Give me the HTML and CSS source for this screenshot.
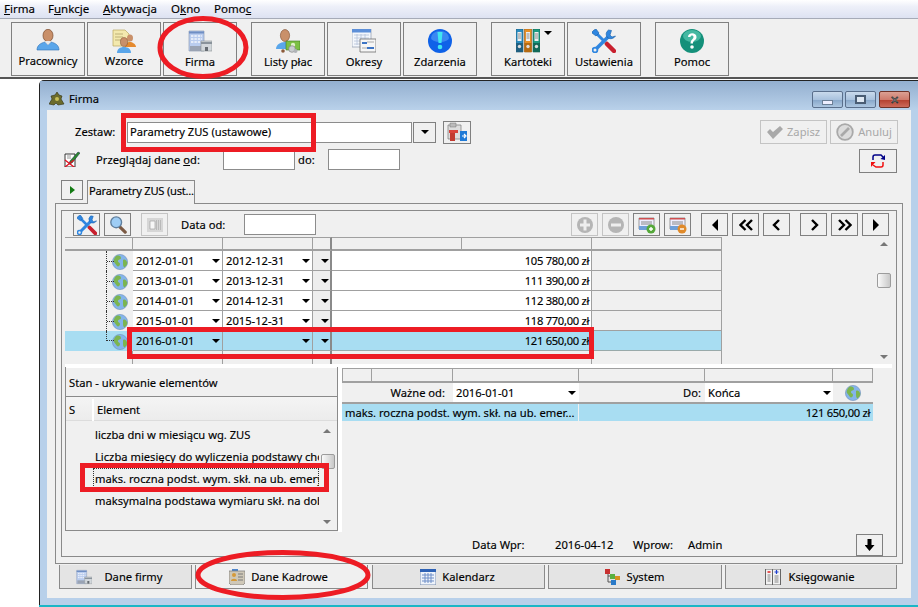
FILE: index.html
```html
<!DOCTYPE html>
<html lang="pl">
<head>
<meta charset="utf-8">
<title>Firma</title>
<link rel="stylesheet" href="styles.css">
</head>
<body>
<svg class="sprite" aria-hidden="true">
  <symbol id="person" viewBox="0 0 24 24"><ellipse cx="12" cy="6.500" rx="5" ry="6.200" fill="#c9906a" stroke="#7a4a2c" stroke-width=".7"/><path d="M1 21c0-5 4-7 8-8l3 3 3-3c4 1 8 3 8 8z" fill="#5aa6ea" stroke="#2c6fb5" stroke-width=".6"/><path d="M9 13l3 3 3-3-1-1h-4z" fill="#e8e8e8"/></symbol>
  <symbol id="wzorce" viewBox="0 0 24 24"><path d="M1 1h12l4 4v12H1z" fill="#f3e9ae" stroke="#b9a860" stroke-width=".7"/><path d="M3 5h8M3 8h8M3 11h6" stroke="#bdb078" stroke-width="1"/><ellipse cx="18" cy="9" rx="3" ry="3.600" fill="#c9906a"/><path d="M13 18c0-3 3-5 5-5s6 2 6 5z" fill="#e58a2e"/><ellipse cx="12" cy="13" rx="3.600" ry="4.400" fill="#c9906a" stroke="#7a4a2c" stroke-width=".5"/><path d="M5 24c0-4 3-6 7-6s7 2 7 6z" fill="#5aa6ea"/></symbol>
  <symbol id="firma" viewBox="0 0 24 24"><path d="M1 2h15v20H1z" fill="#b9ccee" stroke="#8090ad" stroke-width=".6"/><path d="M1 3.500h15" stroke="#6f8fc4" stroke-width="2"/><path d="M3 7h11M3 10h11M3 13h11" stroke="#f3f6fc" stroke-width="1.400" stroke-dasharray="2.400 1"/><path d="M2 22v-5h14v5" fill="#9aa3b3"/><path d="M13 12h11v10H13z" fill="#d2d7db" stroke="#8a9096" stroke-width=".6"/><path d="M13 14h11" stroke="#8a939b" stroke-width="2"/><path d="M17 18h3v4h-3z" fill="#666c72"/></symbol>
  <symbol id="listy" viewBox="0 0 24 24"><ellipse cx="9" cy="6.500" rx="4.600" ry="6" fill="#c9906a" stroke="#7a4a2c" stroke-width=".6"/><path d="M0 20c0-4 4-7 9-7s7 2 8 5v2z" fill="#5aa6ea"/><path d="M10 12h14v9H10z" fill="#7cc044" stroke="#3c7a22" stroke-width=".6"/><circle cx="17" cy="16" r="2.200" fill="#dff2c8"/><circle cx="16" cy="20" r="3.300" fill="#c9cdd0" stroke="#777" stroke-width=".6"/><circle cx="19.500" cy="22" r="2" fill="#b0b4b8"/><circle cx="7" cy="22" r="1.800" fill="#8b5a3a"/></symbol>
  <symbol id="okresy" viewBox="0 0 24 24"><path d="M0 0h19v18H0z" fill="#f4f7fc" stroke="#8d99ad" stroke-width=".7"/><path d="M0 0h19v3.500H0z" fill="#5d8fd8"/><path d="M2 6h15M2 9h15M2 12h15M2 15h15M5 5v11M9 5v11M13 5v11" stroke="#b5c2d8" stroke-width=".8"/><path d="M8 10h16v13H8z" fill="#f6f6f6" stroke="#6c6c6c" stroke-width=".8"/><path d="M10 13h5v2h-5z" fill="#3d74c4"/><path d="M15 18h7v2h-7z" fill="#3d74c4"/><path d="M15 13h7M10 19h5" stroke="#aaa"/></symbol>
  <symbol id="alert" viewBox="0 0 24 24"><circle cx="12" cy="12" r="12" fill="#0f62e8"/><path d="M3 9a9 7 0 0 1 18 0 9 4 0 0 1-18 0z" fill="#3a88f2"/><path d="M9.500 3h5l-1 11h-3z" fill="#3fe6f2"/><circle cx="12" cy="18" r="2.300" fill="#3fe6f2"/></symbol>
  <symbol id="kart" viewBox="0 0 24 24"><path d="M0 0h7v23H0z" fill="#2b8cc0" stroke="#17556f" stroke-width=".6"/><path d="M8.500 0h7v23h-7z" fill="#e88f24" stroke="#91540e" stroke-width=".6"/><path d="M17 0h7v23h-7z" fill="#1e9b82" stroke="#0e5a4a" stroke-width=".6"/><path d="M0 14h7v9H0z" fill="#1f5f80"/><path d="M8.500 14h7v9h-7z" fill="#b56a12"/><path d="M17 14h7v9h-7z" fill="#126a58"/><path d="M1.500 3h4v9h-4zM10 3h4v9h-4zM18.500 3h4v9h-4z" fill="#eee"/><path d="M2 5h3M2 7h3M2 9h3M10.500 5h3M10.500 7h3M10.500 9h3M19 5h3M19 7h3M19 9h3" stroke="#777" stroke-width=".8"/><circle cx="3.500" cy="17.500" r="1.700" fill="#ddd"/><circle cx="12" cy="17.500" r="1.700" fill="#ddd"/><circle cx="20.500" cy="17.500" r="1.700" fill="#ddd"/></symbol>
  <symbol id="tools" viewBox="0 0 24 24"><path d="M3 3l9 9" stroke="#2f86e0" stroke-width="3"/><path d="M13 13l2 2" stroke="#9aa" stroke-width="3"/><path d="M15 15l7 7" stroke="#c8202e" stroke-width="4.500" stroke-linecap="round"/><path d="M3 21L17 7" stroke="#2f86e0" stroke-width="3.600"/><path d="M16.500 1a5.500 5.500 0 0 0-1.500 7l1 1a5.500 5.500 0 0 0 7.500-2l-3.500 1-2-2 1.500-4.500z" fill="#2f86e0" stroke="#155ea8" stroke-width=".6"/><path d="M0 3l2-2 2-1 3 4-3 3-4-3z" fill="#2f86e0" stroke="#155ea8" stroke-width=".6"/><circle cx="3" cy="21" r="2.400" fill="#f0f0f0" stroke="#2f86e0" stroke-width="1.800"/></symbol>
  <symbol id="help" viewBox="0 0 24 24"><circle cx="12" cy="12" r="12" fill="#14907a"/><ellipse cx="12" cy="7" rx="9" ry="6" fill="#45b8a2"/><path d="M8 8c0-5 8.500-5 8.500 0 0 3.500-3.500 3-3.500 6.500h-2.500c0-4 3-4 3-6.500 0-2-3-2-3 0z" fill="#fff"/><circle cx="12" cy="18" r="1.800" fill="#fff"/></symbol>
  <symbol id="globe" viewBox="0 0 16 16"><circle cx="8" cy="8" r="7.600" fill="#84b4ea" stroke="#6f8eb8" stroke-width=".6"/><path d="M4 2c3-1 5 0 5 2S6 5 6 7s2 1 2 3-2 3-3 2-2-3-3-4 0-4 2-6zM11 6c2-1 3 0 4 2s-1 4-2 5-2-1-2-3 0-3 0-4z" fill="#7cb550"/></symbol>
  <symbol id="biz" viewBox="0 0 16 16"><path d="M6 4l2-3 2 3 3 1-1 3 3 5-6 1-2-2-2 2-5-1 3-5-1-3z" fill="#6b6b2c" stroke="#2f2f10" stroke-width=".6"/><circle cx="8" cy="8" r="2" fill="#c7bf57"/></symbol>
  <symbol id="config" viewBox="0 0 20 20"><path d="M1 3h13v14H1z" fill="#ddd" stroke="#777" stroke-width=".7"/><path d="M3 1h6v4H3z" fill="#bbb" stroke="#777" stroke-width=".5"/><path d="M3 8h5v11H3z" fill="#c23b30"/><path d="M2 8h9v3H2z" fill="#d9433a"/><path d="M13 9h7v10h-7z" fill="#1f7ad6"/><path d="M15 14h3M17 12l2 2-2 2" stroke="#fff" stroke-width="1.200" fill="none"/></symbol>
  <symbol id="noedit" viewBox="0 0 16 16"><path d="M1 3h10v13H1z" fill="#fff" stroke="#222" stroke-width=".9"/><path d="M3 5h4M3 7h4" stroke="#999"/><path d="M6 10L14 1l2 1-8 10-3 1z" fill="#2c8a2c" stroke="#124" stroke-width=".5"/><path d="M1 9l9 7M10 9l-9 7" stroke="#e01020" stroke-width="1.300"/></symbol>
  <symbol id="check" viewBox="0 0 16 16"><path d="M0 8l3-3 3 3 7-6 3 3-10 10z" fill="#a9a9a9"/></symbol>
  <symbol id="ban" viewBox="0 0 18 18"><circle cx="9" cy="9" r="7.800" fill="#dcdcdc" stroke="#a9a9a9" stroke-width="1.800"/><path d="M5 13l8-8" stroke="#a9a9a9" stroke-width="2.600"/></symbol>
  <symbol id="refresh" viewBox="0 0 14 14"><path d="M2 6V3a2 2 0 0 1 2-2h6l2 2" fill="none" stroke="#000088" stroke-width="1.500"/><path d="M9.500 5L14 1v5z" fill="#000088"/><path d="M12 8v3a2 2 0 0 1-2 2H5L2 11" fill="none" stroke="#f01010" stroke-width="1.500"/><path d="M4.500 8L0 8v5z" fill="#f01010"/></symbol>
  <symbol id="zoomg" viewBox="0 0 20 20"><path d="M12 12l6 6" stroke="#7b5a44" stroke-width="3.500" stroke-linecap="round"/><circle cx="8" cy="7" r="6" fill="#9ecdf5" stroke="#5f7f9e" stroke-width="1.500"/></symbol>
  <symbol id="calc" viewBox="0 0 16 14"><path d="M0 0h16v14H0z" fill="#d6d6d6"/><path d="M3 3h5v8H3z" fill="#f6f6f6" stroke="#999" stroke-width=".6"/><path d="M9 3h5M9 5h5M9 7h5M9 9h5M9 11h5" stroke="#9c9c9c" stroke-dasharray="1 1"/></symbol>
  <symbol id="plus" viewBox="0 0 16 16"><circle cx="8" cy="8" r="8" fill="#b5b5b5"/><path d="M3 6.500h3.500v-4h3v4H13v3H9.500v4h-3v-4H3z" fill="#eee"/></symbol>
  <symbol id="minus" viewBox="0 0 16 16"><circle cx="8" cy="8" r="8" fill="#b5b5b5"/><path d="M3 6.500h10v3H3z" fill="#eee"/></symbol>
  <symbol id="rowadd" viewBox="0 0 18 18"><path d="M1 2h15v11H1z" fill="#eef" stroke="#777" stroke-width=".7"/><path d="M1 2h15v1.500H1z" fill="#d05050"/><path d="M3 6h11M3 8h11" stroke="#888"/><path d="M1 10h10v4H1z" fill="#6f9fd8"/><circle cx="13" cy="13" r="4.500" fill="#55a83a"/><path d="M11 13h4M13 11v4" stroke="#fff" stroke-width="1.400"/></symbol>
  <symbol id="rowdel" viewBox="0 0 18 18"><path d="M1 2h15v11H1z" fill="#eef" stroke="#777" stroke-width=".7"/><path d="M1 2h15v1.500H1z" fill="#d05050"/><path d="M3 6h11M3 8h11" stroke="#888"/><path d="M1 10h10v4H1z" fill="#6f9fd8"/><circle cx="13" cy="13" r="4.500" fill="#e08a2a"/><path d="M11 13h4" stroke="#fff" stroke-width="1.400"/></symbol>
  <symbol id="kadry" viewBox="0 0 16 16"><path d="M3 0h6v3H3z" fill="#4f86cc"/><path d="M0 2h16v12l-2 2H2l-2-2z" fill="#cfc8b8" stroke="#777" stroke-width=".7"/><circle cx="5" cy="6" r="2" fill="#d59a3a"/><path d="M2 12c0-3 6-3 6 0z" fill="#d59a3a"/><path d="M9 5h5M9 8h5M9 11h5" stroke="#7a7a7a"/></symbol>
  <symbol id="cal" viewBox="0 0 16 16"><path d="M0 0h16v16H0z" fill="#eef3fb" stroke="#7a8fb0"/><path d="M0 0h16v3H0z" fill="#2e62b5"/><path d="M2 6h12M2 9h12M2 12h12M5 4v10M8 4v10M11 4v10" stroke="#6f8fc8"/></symbol>
  <symbol id="sys" viewBox="0 0 16 16"><path d="M3 3v10h6M3 7h4" fill="none" stroke="#555"/><path d="M0 0h5v5H0z" fill="#c83030"/><path d="M5 5h5v5H5z" fill="#5ab040"/><path d="M10 7h5v4h-5z" fill="#d89020"/><path d="M6 11h5v5H6z" fill="#2a7ac8"/></symbol>
  <symbol id="ksieg" viewBox="0 0 15 16"><path d="M0 0h15v16H0z" fill="#f2f2f2" stroke="#666"/><path d="M7 0v16" stroke="#666"/><path d="M2 3h3" stroke="#e02020" stroke-width="1.500"/><path d="M9 3h4M11 1v4" stroke="#2040d0" stroke-width="1.200"/><path d="M2 6h3M2 8h3M2 10h3M2 12h3M9 7h4M9 9h4M9 11h4M9 13h4" stroke="#888"/></symbol>
  <symbol id="ch1l" viewBox="0 0 14 12"><path d="M9 1L4 6l5 5" fill="none" stroke="#000" stroke-width="2.400"/></symbol>
  <symbol id="ch1r" viewBox="0 0 14 12"><path d="M5 1l5 5-5 5" fill="none" stroke="#000" stroke-width="2.400"/></symbol>
  <symbol id="ch2l" viewBox="0 0 14 12"><path d="M6.500 1L1.500 6l5 5M13 1L8 6l5 5" fill="none" stroke="#000" stroke-width="2.400"/></symbol>
  <symbol id="ch2r" viewBox="0 0 14 12"><path d="M1 1l5 5-5 5M7.500 1l5 5-5 5" fill="none" stroke="#000" stroke-width="2.400"/></symbol>
</svg>

<header class="menubar">
  <span class="menu-item m1"><u>F</u>irma</span>
  <span class="menu-item m2">F<u>u</u>nkcje</span>
  <span class="menu-item m3"><u>A</u>ktywacja</span>
  <span class="menu-item m4">O<u>k</u>no</span>
  <span class="menu-item m5">Pomo<u>c</u></span>
</header>

<nav class="toolbar">
  <div class="tool-group">
    <button class="tool tool-up"><svg class="tool-ic"><use href="#person"/></svg><span>Pracownicy</span></button>
    <button class="tool tool-up"><svg class="tool-ic"><use href="#wzorce"/></svg><span>Wzorce</span></button>
    <button class="tool"><svg class="tool-ic"><use href="#firma"/></svg><span>Firma</span></button>
  </div>
  <div class="tool-group">
    <button class="tool"><svg class="tool-ic"><use href="#listy"/></svg><span>Listy płac</span></button>
    <button class="tool"><svg class="tool-ic"><use href="#okresy"/></svg><span>Okresy</span></button>
    <button class="tool"><svg class="tool-ic"><use href="#alert"/></svg><span>Zdarzenia</span></button>
  </div>
  <div class="tool-group">
    <button class="tool tool-menu"><svg class="tool-ic"><use href="#kart"/></svg><span>Kartoteki</span></button>
    <button class="tool"><svg class="tool-ic"><use href="#tools"/></svg><span>Ustawienia</span></button>
  </div>
  <div class="tool-group">
    <button class="tool"><svg class="tool-ic"><use href="#help"/></svg><span>Pomoc</span></button>
  </div>
</nav>

<main class="desktop">
  <section class="window">
    <div class="titlebar">
      <svg class="title-ic"><use href="#biz"/></svg>
      <span class="title-text">Firma</span>
      <div class="win-btns">
        <span class="win-btn"><i class="glyph-min"></i></span>
        <span class="win-btn"><i class="glyph-max"></i></span>
        <span class="win-btn win-close">✕</span>
      </div>
    </div>
    <div class="client">
      <div class="form-row row-a">
        <label class="lbl-zestaw">Zestaw:</label>
        <div class="field field-zestaw">Parametry ZUS (ustawowe)</div>
        <button class="btn btn-drop"><i class="arr"></i></button>
        <button class="btn btn-cfg"><svg class="ic20"><use href="#config"/></svg></button>
        <div class="spacer"></div>
        <button class="btn btn-off btn-save"><svg class="ic16"><use href="#check"/></svg>Zapisz</button>
        <button class="btn btn-off btn-cancel"><svg class="ic18"><use href="#ban"/></svg>Anuluj</button>
      </div>
      <div class="form-row row-b">
        <svg class="ic-noedit"><use href="#noedit"/></svg>
        <label class="lbl-przegl">Przeglądaj dane <u>o</u>d:</label>
        <div class="field field-date"></div>
        <label class="lbl-do">do:</label>
        <div class="field field-date"></div>
        <div class="spacer"></div>
        <button class="btn btn-refresh"><svg class="ic14"><use href="#refresh"/></svg></button>
      </div>
      <div class="tabstrip">
        <button class="btn btn-play"><i class="arr-right-green"></i></button>
        <div class="doc-tab">Parametry ZUS (ust...</div>
      </div>
      <div class="outer-panel">
        <div class="inner-panel">
          <div class="grid-toolbar">
            <button class="btn btn-sq"><svg class="ic20"><use href="#tools"/></svg></button>
            <button class="btn btn-sq"><svg class="ic18"><use href="#zoomg"/></svg></button>
            <button class="btn btn-sq btn-off btn-calc"><svg class="ic-calc"><use href="#calc"/></svg></button>
            <label class="lbl-dataod">Data od:</label>
            <div class="field field-dataod"></div>
            <div class="spacer"></div>
            <button class="btn btn-sq btn-off"><svg class="ic16"><use href="#plus"/></svg></button>
            <button class="btn btn-sq btn-off"><svg class="ic16"><use href="#minus"/></svg></button>
            <button class="btn btn-sq"><svg class="ic18"><use href="#rowadd"/></svg></button>
            <button class="btn btn-sq"><svg class="ic18"><use href="#rowdel"/></svg></button>
            <div class="nav-group">
              <button class="btn btn-sq"><i class="tri-left"></i></button>
              <button class="btn btn-sq"><svg class="ic-ch"><use href="#ch2l"/></svg></button>
              <button class="btn btn-sq"><svg class="ic-ch"><use href="#ch1l"/></svg></button>
            </div>
            <div class="nav-group nav-group-r">
              <button class="btn btn-sq"><svg class="ic-ch"><use href="#ch1r"/></svg></button>
              <button class="btn btn-sq"><svg class="ic-ch"><use href="#ch2r"/></svg></button>
              <button class="btn btn-sq"><i class="tri-right"></i></button>
            </div>
          </div>

          <div class="upper">
            <div class="dgrid">
              <div class="hd"></div><div class="hd"></div><div class="hd"></div><div class="hd hd-thick"></div><div class="hd"></div><div class="hd"></div><div class="hd"></div>

              <div class="c c-tree"><svg class="globe"><use href="#globe"/></svg></div><div class="c c-in">2012-01-01<i class="arr"></i></div><div class="c c-in">2012-12-31<i class="arr"></i></div><div class="c c-ar"><i class="arr"></i></div><div class="c c-amt">105 780,00 zł</div><div class="c c-last"></div>
              <div class="c c-tree"><svg class="globe"><use href="#globe"/></svg></div><div class="c c-in">2013-01-01<i class="arr"></i></div><div class="c c-in">2013-12-31<i class="arr"></i></div><div class="c c-ar"><i class="arr"></i></div><div class="c c-amt">111 390,00 zł</div><div class="c c-last"></div>
              <div class="c c-tree"><svg class="globe"><use href="#globe"/></svg></div><div class="c c-in">2014-01-01<i class="arr"></i></div><div class="c c-in">2014-12-31<i class="arr"></i></div><div class="c c-ar"><i class="arr"></i></div><div class="c c-amt">112 380,00 zł</div><div class="c c-last"></div>
              <div class="c c-tree"><svg class="globe"><use href="#globe"/></svg></div><div class="c c-in">2015-01-01<i class="arr"></i></div><div class="c c-in">2015-12-31<i class="arr"></i></div><div class="c c-ar"><i class="arr"></i></div><div class="c c-amt">118 770,00 zł</div><div class="c c-last"></div>
              <div class="c c-tree sel c-tree-end"><svg class="globe"><use href="#globe"/></svg></div><div class="c c-in sel">2016-01-01<i class="arr"></i></div><div class="c c-in sel"><span></span><i class="arr"></i></div><div class="c c-ar sel"><i class="arr"></i></div><div class="c c-amt sel">121 650,00 zł</div><div class="c c-last sel"></div>

              <div class="t t-first"></div><div class="t"></div><div class="t"></div><div class="t t-thick"></div><div class="t t-wide"></div><div class="t"></div>
            </div>
            <div class="vscroll vscroll-upper">
              <i class="sb-up"></i>
              <i class="sb-thumb thumb-upper"></i>
              <i class="sb-down"></i>
            </div>
          </div>

          <div class="lower">
            <div class="stan">
              <div class="stan-title">Stan - ukrywanie elementów</div>
              <div class="stan-head"><span class="col-s">S</span><span class="col-el">Element</span></div>
              <div class="stan-list">
                <ul class="stan-rows">
                  <li>liczba dni w miesiącu wg. ZUS</li>
                  <li>Liczba miesięcy do wyliczenia podstawy chorobowej</li>
                  <li class="focused">maks. roczna podst. wym. skł. na ub. emerytalne</li>
                  <li>maksymalna podstawa wymiaru skł. na dobrowolne</li>
                </ul>
                <div class="vscroll vscroll-lower">
                  <i class="sb-up"></i>
                  <i class="sb-thumb thumb-lower"></i>
                  <i class="sb-down"></i>
                </div>
              </div>
            </div>
            <div class="detail">
              <div class="detail-head">
                <span class="dh dh1"></span><span class="dh dh2"></span><span class="dh dh3"></span><span class="dh dh4"></span><span class="dh dh5"></span><span class="dh dh6"></span>
              </div>
              <div class="detail-form">
                <label class="lbl-wazne">Ważne od:</label>
                <div class="combo combo-1">2016-01-01<i class="arr"></i></div>
                <label class="lbl-dokonca">Do:</label>
                <div class="combo combo-2">Końca<i class="arr"></i></div>
                <svg class="globe detail-globe"><use href="#globe"/></svg>
              </div>
              <div class="detail-row">
                <span class="dr-name">maks. roczna podst. wym. skł. na ub. emer...</span>
                <span class="dr-amt">121 650,00 zł</span>
              </div>
            </div>
          </div>

          <div class="footer-row">
            <span class="f1">Data Wpr:</span>
            <span class="f2">2016-04-12</span>
            <span class="f3">Wprow:</span>
            <span class="f4">Admin</span>
            <button class="btn btn-sq btn-down"><i class="arrow-down"></i></button>
          </div>
        </div>
      </div>
      <div class="bottom-tabs">
        <div class="btab bt1"><svg class="ic16 btab-ic1"><use href="#firma"/></svg>Dane firmy</div>
        <div class="btab bt2 active"><svg class="ic16"><use href="#kadry"/></svg>Dane Kadrowe</div>
        <div class="btab bt3"><svg class="ic16"><use href="#cal"/></svg>Kalendarz</div>
        <div class="btab bt4"><svg class="ic16"><use href="#sys"/></svg>System</div>
        <div class="btab bt5"><svg class="ic16"><use href="#ksieg"/></svg>Księgowanie</div>
      </div>
    </div>
  </section>
</main>
<div class="taskline"></div>

<svg class="annot" width="918" height="607" aria-hidden="true">
  <ellipse cx="203" cy="47.500" rx="43" ry="29" />
  <ellipse cx="283" cy="575" rx="85" ry="22.500" />
  <rect x="123.500" y="115.500" width="190" height="34"/>
  <rect x="129.500" y="329.500" width="462" height="27"/>
  <rect x="82.500" y="465.500" width="244" height="24"/>
</svg>
</body>
</html>
```
FILE: styles.css
```css
* { box-sizing: border-box; }
html, body { margin: 0; padding: 0; }
body {
  width: 918px; height: 607px; overflow: hidden; position: relative;
  background: #fff; color: #000;
  font: 11.2px/14px "Noto Sans", "Open Sans", sans-serif;
  -webkit-text-stroke: 0.15px #000;
}
.sprite { display: none; }
button { font: inherit; color: inherit; padding: 0; margin: 0; }
i { display: block; font-style: normal; }
.spacer { flex: 1; }

.menubar {
  height: 18px; display: flex; align-items: center; font-size: 11.5px;
  background: linear-gradient(#ffffff 0, #eef0f9 35%, #dde2f2 100%);
  position: relative; padding-left: 4px;
}
.menu-item { white-space: nowrap; }
.m1 { width: 44px; } .m2 { width: 55px; } .m3 { width: 68px; } .m4 { width: 43px; }

.toolbar {
  height: 61px; background: #f0f0f0; border-top: 1px solid #a6abb8; border-bottom: 2px solid #555;
  display: flex; padding: 3px 0 0 11px; gap: 14px;
}
.tool-group { display: flex; gap: 2px; }
.tool {
  width: 74px; height: 54px; background: #f0f0f0; border: 1px solid #808080;
  display: flex; flex-direction: column; align-items: center; padding-top: 6px; position: relative;
}
.tool-ic { width: 24px; height: 24px; display: block; flex: none; }
.tool span { margin-top: 2px; }
.tool-up span { margin-top: 1px; }
.tool-menu::after {
  content: ""; position: absolute; right: 12px; top: 8px;
  border: 4px solid transparent; border-top: 4px solid #000; border-bottom: 0;
}

.desktop { display: block; }
.window {
  position: absolute; left: 39px; top: 80px; width: 879px; height: 525px;
  background: #b8d0ea; border-left: 1px solid #222; border-top: 1px solid #222; border-top-left-radius: 5px;
}
.titlebar {
  height: 29px; background: linear-gradient(#93afcf, #b9d1ea);
  display: flex; align-items: center; padding: 6px 0 0 9px; position: relative;
}
.title-ic { width: 16px; height: 16px; }
.title-text { margin-left: 4px; }
.win-btns { position: absolute; right: 8px; top: 10px; display: flex; gap: 2px; }
.win-btn {
  width: 31px; height: 17px; border: 1px solid #5a6f8c; border-radius: 2px;
  background: linear-gradient(#c9daec 0, #a9c2de 50%, #86a6c9 51%, #adc6e0 100%);
  display: flex; align-items: center; justify-content: center; color: #fff; font-size: 11px; font-weight: bold;
}
.win-close { background: linear-gradient(#dba093 0, #cf7b6c 50%, #b33e2d 51%, #cc6a5a 100%); border-color: #6e3228; width: 31px; margin-left: 1px; }
.glyph-min { width: 11px; height: 5px; background: #eef; border: 1px solid #6c7f96; margin-top: 5px; }
.glyph-max { width: 11px; height: 9px; background: #dde7f2; border: 2px solid #4a5d74; }

.client { margin: 0 7px; height: 488px; background: #f0f0f0; padding-top: 10px; }
.form-row { display: flex; align-items: center; }
.row-a { height: 24px; padding: 0 13px 0 28px; }
.field { background: #fff; border: 1px solid #8c8c8c; }
.btn { background: #f0f0f0; border: 1px solid #808080; display: flex; align-items: center; justify-content: center; }
.lbl-zestaw { width: 52px; }
.field-zestaw { width: 285px; height: 21px; padding: 2px 2px; }
.btn-drop { width: 23px; height: 21px; margin-left: 1px; }
.btn-cfg { width: 28px; height: 23px; margin-left: 7px; }
.btn-off { border-color: #c4c4c4; color: #a8a8a8; -webkit-text-stroke: 0; }
.btn-save { width: 67px; height: 24px; gap: 4px; }
.btn-cancel { width: 68px; height: 24px; margin-left: 3px; gap: 4px; }
.ic20 { width: 20px; height: 20px; display: block; }
.ic18 { width: 18px; height: 18px; display: block; flex: none; }
.ic16 { width: 16px; height: 16px; display: block; flex: none; }
.ic14 { width: 14px; height: 14px; display: block; }
.ic-calc { width: 16px; height: 14px; display: block; }
.ic-ch { width: 14px; height: 12px; display: block; }
.row-b { height: 24px; margin-top: 5px; padding: 0 14px 0 17px; }
.ic-noedit { width: 16px; height: 16px; margin-bottom: 4px; }
.lbl-przegl { margin-left: 16px; width: 127px; margin-bottom: 3px; }
.field-date { width: 72px; height: 21px; margin-bottom: 3px; }
.lbl-do { width: 33px; padding-left: 3px; margin-bottom: 3px; }
.btn-refresh { width: 38px; height: 24px; }

.tabstrip { display: flex; height: 24px; margin-top: 7px; padding-left: 14px; position: relative; z-index: 1; }
.btn-play { width: 22px; height: 20px; }
.arr-right-green { border: 4px solid transparent; border-left: 5px solid #137a13; border-right: 0; }
.doc-tab { width: 108px; height: 24px; margin-left: 4px; background: #f0f0f0; border: 1px solid #8a8a8a; border-bottom: 0; padding: 3px 0 3px 1px; white-space: nowrap; letter-spacing: -0.25px; }

.outer-panel { margin: -1px 0 0 8px; width: 848px; height: 361px; border: 1px solid #8a8a8a; padding: 6px 5px; }
.inner-panel { height: 347px; border: 1px solid #8a8a8a; padding: 2px 7px 0 3px; }

.grid-toolbar { display: flex; height: 24px; padding-left: 8px; position: relative; }
.btn-sq { width: 27px; height: 23px; flex: none; }
.grid-toolbar > .btn-sq + .btn-sq { margin-left: 4px; }
.grid-toolbar > .btn-calc { margin-left: 10px !important; }
.lbl-dataod { margin-left: 13px; width: 63px; line-height: 23px; }
.field-dataod { width: 72px; height: 21px; margin-top: 1px; }
.nav-group { display: flex; gap: 4px; margin-left: 10px; }
.tri-left { border: 6px solid transparent; border-right: 6px solid #000; border-left: 0; }
.tri-right { border: 6px solid transparent; border-left: 6px solid #000; border-right: 0; }

.arr { width: 0; height: 0; border: 4px solid transparent; border-top: 4px solid #000; border-bottom: 0; flex: none; }

.upper { display: flex; height: 127px; justify-content: space-between; margin-right: -4px; }
.dgrid {
  width: 657px; height: 127px;
  display: grid;
  grid-template-columns: 68px 90px 90px 19px 130px 130px 130px;
  grid-template-rows: 14px repeat(5, 20px) 13px;
  align-items: stretch;
}
.hd { border-top: 1px solid #a0a0a0; border-bottom: 2px solid #a0a0a0; border-right: 1px solid #a0a0a0; }
.hd-thick { border-right: 2px solid #8a8a8a; }
.c { border-bottom: 1px solid #a0a0a0; border-right: 1px solid #a0a0a0; height: 20px; display: flex; align-items: center; white-space: nowrap; padding-top: 1px; }
.c-tree { grid-column: 1; justify-content: flex-end; padding-right: 4px; position: relative; border-right-color: transparent; border-bottom: 0; }
.c-tree::before {
  content: ""; position: absolute; left: 41px; top: 0; bottom: 0; width: 7px;
  border-left: 1px dotted #333;
  background: linear-gradient(90deg, #333 50%, transparent 50%) 0 10px / 2px 1px repeat-x;
}
.c-tree-end::before { bottom: 10px; background-position: 0 9px; }
.c-in { background: #fff; padding: 1px 2px 0 3px; justify-content: space-between; }
.c-in.sel { background: #a8ddf2; }
.c-ar { background: #eeeeee; justify-content: flex-end; padding-right: 1px; border-right: 2px solid #8a8a8a; }
.c-ar.sel { background: #a8ddf2; }
.c-amt { grid-column: span 2; background: #fff; justify-content: flex-end; padding-right: 2px; letter-spacing: -0.3px; }
.c-amt.sel { background: #a8ddf2; }
.sel { background: #a8ddf2; border-bottom-color: #9aa; }
.t { border-right: 1px solid #a0a0a0; height: 13px; }
.t-thick { border-right: 2px solid #8a8a8a; }
.t-wide { grid-column: span 2; }

.vscroll { width: 16px; background: #f0f0f0; position: relative; }
.vscroll-upper { height: 127px; }
.sb-up, .sb-down { position: absolute; left: 3px; width: 0; height: 0; border: 4px solid transparent; }
.sb-up { top: 5px; border-bottom: 4px solid #777; border-top: 0; }
.sb-down { bottom: 5px; border-top: 4px solid #777; border-bottom: 0; }
.sb-thumb { position: absolute; left: 1px; width: 14px; height: 15px; border: 1px solid #9c9c9c; border-radius: 2px; background: linear-gradient(90deg, #fafafa, #c8c8c8); }
.thumb-upper { top: 36px; left: 0; }
.thumb-lower { top: 30px; }

.lower { display: flex; height: 172px; border-top: 4px solid #fff; margin-right: -3px; }
.stan { width: 273px; height: 164px; border-right: 1px solid #8a8a8a; border-bottom: 1px solid #8a8a8a; border-left: 1px solid #8a8a8a; margin-top: -1px; }
.stan-title { height: 30px; line-height: 32px; padding-left: 3px; border-bottom: 1px solid #8a8a8a; }
.stan-head { height: 24px; display: flex; align-items: center; background: linear-gradient(#f4f4f4, #ececec); border-bottom: 1px solid #dcdcdc; padding-top: 2px; }
.col-s { width: 28px; padding-left: 3px; border-right: 2px solid #fff; height: 22px; line-height: 22px; }
.col-el { padding-left: 3px; }
.stan-list { display: flex; height: 108px; position: relative; }
.stan-rows { list-style: none; margin: 0; padding: 3px 0 0 0; width: 253px; overflow: hidden; }
.stan-rows li { height: 22px; line-height: 22px; padding-left: 29px; white-space: nowrap; overflow: hidden; }
.stan-rows .focused { outline: 1px dotted #333; outline-offset: -1px; margin-left: 27px; padding-left: 2px; width: 226px; }
.vscroll-lower { height: 105px; margin-top: 3px; width: 16px; margin-left: 1px; }

.detail { border-left: 4px solid #fff; width: 535px; height: 164px; }
.detail-head { display: flex; height: 15px; }
.dh { border: 1px solid #a0a0a0; border-left: 0; border-bottom-width: 2px; height: 15px; }
.dh1 { width: 30px; border-left: 1px solid #a0a0a0; }
.dh2 { width: 81px; } .dh3 { width: 126px; } .dh4 { width: 126px; } .dh5 { width: 128px; } .dh6 { width: 40px; }
.detail-form { display: flex; height: 21px; align-items: center; border-bottom: 2px solid #a0a0a0; }
.lbl-wazne { width: 103px; text-align: right; }
.combo { background: #fff; height: 19px; padding: 0 2px 0 3px; display: flex; justify-content: space-between; align-items: center; }
.combo-1 { width: 126px; margin-left: 8px; padding-right: 3px; }
.lbl-dokonca { width: 122px; text-align: right; }
.combo-2 { width: 128px; margin-left: 4px; }
.globe { width: 16px; height: 16px; display: block; flex: none; }
.detail-globe { margin-left: 12px; }
.detail-row { display: flex; height: 17px; width: 531px; background: #a8ddf2; align-items: center; white-space: nowrap; }
.dr-name { width: 237px; padding-left: 3px; border-right: 1px solid #f0f0f0; height: 17px; line-height: 18px; }
.dr-amt { flex: 1; text-align: right; padding: 1px 3px 0 0; letter-spacing: -0.3px; }

.footer-row { height: 24px; display: flex; align-items: center; padding-left: 407px; position: relative; margin-top: -3px; }
.f1 { width: 83px; } .f2 { width: 78px; } .f3 { width: 55px; } .f4 { width: 168px; }
.btn-down { width: 27px; height: 22px; }
.arrow-down { width: 10px; height: 12px; background: #000; clip-path: polygon(30% 0, 70% 0, 70% 50%, 100% 50%, 50% 100%, 0 50%, 30% 50%); }

.bottom-tabs { display: flex; margin: 1px 0 0 12px; height: 24px; gap: 3px; }
.btab { height: 24px; background: #e4e4e4; border: 1px solid #8a8a8a; border-top: 0; display: flex; align-items: center; justify-content: center; gap: 8px; }
.active { background: #f0f0f0; }
.bt1 { width: 133px; gap: 12px; padding-right: 12px; }
.bt2 { width: 173px; gap: 6px; padding-right: 6px; }
.bt3 { width: 173px; margin-left: 1px; gap: 6px; padding-right: 2px; }
.bt4 { width: 174px; gap: 5px; }
.bt5 { width: 172px; gap: 7px; padding-right: 2px; }

.taskline { position: absolute; left: 39px; right: 0; top: 605px; height: 2px; background: #1bb6c6; }

.annot { position: absolute; left: 0; top: 0; pointer-events: none; fill: none; stroke: #ed1c24; stroke-width: 5; }
```
